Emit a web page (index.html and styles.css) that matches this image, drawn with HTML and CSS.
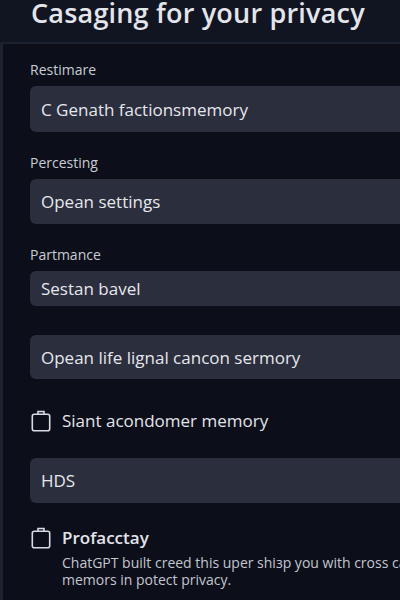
FILE: index.html
```html
<!DOCTYPE html>
<html>
<head>
<meta charset="utf-8">
<link rel="stylesheet" href="styles.css">
</head>
<body>
<header class="top">
  <h1 class="title">Casaging for your privacy</h1>
</header>
<main class="panel">
  <div class="label">Restimare</div>
  <div class="field f1">C Genath factionsmemory</div>
  <div class="label">Percesting</div>
  <div class="field f2">Opean settings</div>
  <div class="label">Partmance</div>
  <div class="field f3">Sestan bavel</div>
  <div class="field f4">Opean life lignal cancon sermory</div>
  <div class="check">
    <svg class="bag" width="20" height="23" viewBox="0 0 20 23"><path d="M7 5V2.5h6V5" fill="none" stroke="#d8dbe2" stroke-width="1.6"/><rect x="1.3" y="5.3" width="17.4" height="16.4" rx="2" fill="none" stroke="#d8dbe2" stroke-width="1.6"/></svg>
    <span>Siant acondomer memory</span>
  </div>
  <div class="field f5">HDS</div>
  <div class="check bold">
    <svg class="bag" width="20" height="23" viewBox="0 0 20 23"><path d="M7 5V2.5h6V5" fill="none" stroke="#d8dbe2" stroke-width="1.6"/><rect x="1.3" y="5.3" width="17.4" height="16.4" rx="2" fill="none" stroke="#d8dbe2" stroke-width="1.6"/></svg>
    <span>Profacctay</span>
  </div>
  <p class="desc">ChatGPT built creed this uper shiзp you with cross cache<br>memors in potect privacy.</p>
</main>
</body>
</html>
```
FILE: styles.css
```css
html, body {
  margin: 0;
  padding: 0;
  background: #0c0f1a;
  height: 100%;
  overflow: hidden;
}
body {
  font-family: "Open Sans", "Noto Sans", sans-serif;
  color: #e2e4ea;
  width: 400px;
}
.top {
  background: #111522;
  height: 42px;
  border-bottom: 2px solid #1b2030;
  overflow: hidden;
}
.title {
  margin: 0;
  padding-left: 31px;
  font-size: 27px;
  font-weight: 600;
  line-height: 26px;
  color: #e4e5ea;
  letter-spacing: 0.2px;
}
.panel {
  border-left: 3px solid #1d2130;
  padding: 16px 0 0 27px;
  height: 560px;
  box-sizing: border-box;
  overflow: hidden;
}
.label {
  font-size: 14px;
  color: #c9ccd4;
  line-height: 20px;
  margin-bottom: 6px;
}
.field {
  background: #2b2e3d;
  border-radius: 6px;
  margin-right: -10px;
  font-size: 17px;
  color: #e6e7ec;
  padding-left: 11px;
  display: flex;
  align-items: center;
  height: 46px;
  box-sizing: border-box;
  margin-bottom: 21px;
}
.f2 { height: 45px; margin-bottom: 21px; }
.f3 { height: 35px; margin-bottom: 29px; }
.f4 { height: 44px; margin-bottom: 30px; }
.f5 { height: 45px; margin-bottom: 23px; }
.check {
  display: flex;
  align-items: center;
  gap: 11px;
  font-size: 17px;
  line-height: 23px;
  color: #e2e4ea;
  margin-bottom: 26px;
  padding-left: 1px;
}
.check.bold {
  font-weight: 600;
  margin-bottom: 5px;
}
.desc {
  margin: 0 0 0 32px;
  font-size: 14px;
  line-height: 17px;
  color: #c3c6cf;
  white-space: nowrap;
}
```
